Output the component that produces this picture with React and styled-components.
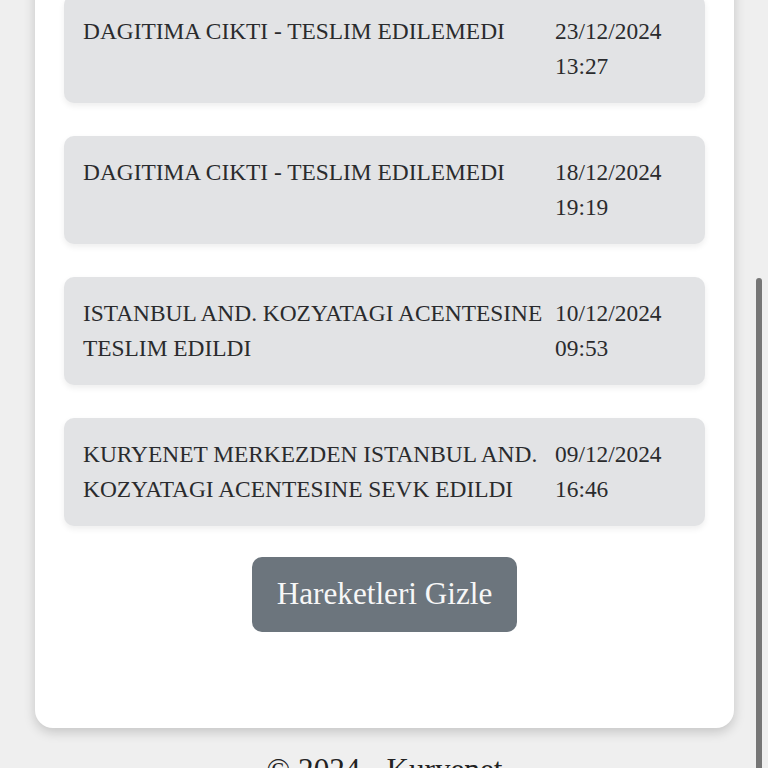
import React from "react";
import styled, { createGlobalStyle } from "styled-components";

const Global = createGlobalStyle`
  html, body {
    margin: 0;
    padding: 0;
    background: #efefef;
    height: 768px;
    overflow: hidden;
  }
  body {
    font-family: "Liberation Serif", "Times New Roman", serif;
    color: #212529;
  }
`;

const Page = styled.div`
  padding: 0 34px 0 35px;
`;

const Card = styled.div`
  margin-top: -41px;
  background: #ffffff;
  border-radius: 18px;
  box-shadow: 0 4px 12px rgba(0, 0, 0, 0.18);
  padding: 36px 29px 96px;
  display: flex;
  flex-direction: column;
  align-items: center;
`;

const List = styled.div`
  align-self: stretch;
  display: flex;
  flex-direction: column;
  gap: 33px;
`;

const Item = styled.div`
  display: flex;
  gap: 10px;
  background: #e2e3e5;
  border-radius: 10px;
  padding: 19px 20px 19px 19px;
  box-shadow: 0 3px 6px rgba(0, 0, 0, 0.07);
  font-size: 23.4px;
  line-height: 35px;
  color: #2a2b2d;
`;

const Title = styled.div`
  flex: 1;
  min-width: 0;
`;

const DateCol = styled.div`
  width: 130px;
  flex-shrink: 0;
`;

const Button = styled.button`
  margin-top: 31px;
  background: #6c757d;
  color: #f7f7f7;
  border: none;
  border-radius: 10px;
  padding: 14px 25px;
  font-family: "Liberation Serif", "Times New Roman", serif;
  font-size: 31.2px;
  line-height: 1.5;
  cursor: pointer;
`;

const Footer = styled.footer`
  margin-top: 19px;
  text-align: center;
  font-size: 31.2px;
  line-height: 1.5;
  color: #222;
`;

const ScrollThumb = styled.div`
  position: fixed;
  right: 6px;
  top: 278px;
  bottom: 0;
  width: 6px;
  border-radius: 3px 3px 0 0;
  background: #767676;
`;

const events = [
  { title: "DAGITIMA CIKTI - TESLIM EDILEMEDI", date: "23/12/2024", time: "13:27" },
  { title: "DAGITIMA CIKTI - TESLIM EDILEMEDI", date: "18/12/2024", time: "19:19" },
  { title: "ISTANBUL AND. KOZYATAGI ACENTESINE TESLIM EDILDI", date: "10/12/2024", time: "09:53" },
  { title: "KURYENET MERKEZDEN ISTANBUL AND. KOZYATAGI ACENTESINE SEVK EDILDI", date: "09/12/2024", time: "16:46" },
];

export default function App() {
  return (
    <>
      <Global />
      <Page>
        <Card>
          <List>
            {events.map((e, i) => (
              <Item key={i}>
                <Title>{e.title}</Title>
                <DateCol>
                  {e.date}
                  <br />
                  {e.time}
                </DateCol>
              </Item>
            ))}
          </List>
          <Button>Hareketleri Gizle</Button>
        </Card>
        <Footer>© 2024 - Kuryenet</Footer>
      </Page>
      <ScrollThumb />
    </>
  );
}
